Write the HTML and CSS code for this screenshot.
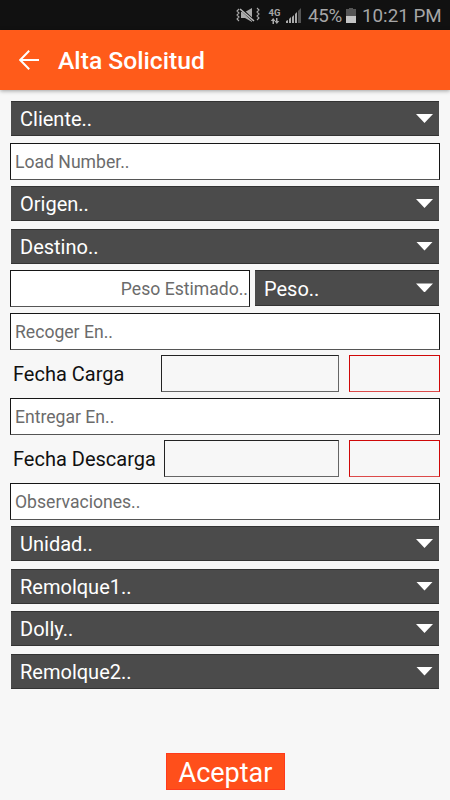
FILE: index.html
```html
<!DOCTYPE html>
<html lang="es">
<head>
<meta charset="utf-8">
<title>Alta Solicitud</title>
<link rel="stylesheet" href="styles.css">
</head>
<body>
<div class="status">
  <svg class="mute" width="24" height="18" viewBox="0 0 24 18">
    <path d="M5 6h4l7-4v14l-7-4H5z" fill="#aaa"/>
    <path d="M4 2l15 14" stroke="#111" stroke-width="2.6"/>
    <path d="M4 3l14 12" stroke="#bbb" stroke-width="1.6"/>
    <path d="M3 3L1 5l2 2-2 2 2 2-2 2 2 2M21 2l2 2-2 2 2 2-2 2 2 2-2 2" fill="none" stroke="#aaa" stroke-width="1.1"/>
  </svg>
  <div class="net"><span>4G</span>
    <svg width="10" height="6" viewBox="0 0 10 6"><path d="M2.5 6V3H.7L3.2 0l2.3 3H4v3zM6 0h1.5v3h1.8L6.8 6 4.5 3H6z" fill="#aaa"/></svg>
  </div>
  <svg class="signal" width="16" height="15" viewBox="0 0 16 15">
    <path d="M0 15v-2l2-1v3zM3 15v-4l2-2v6zM6 15V9l2-2v8zM9 15V6l2-2v11z" fill="#aaa"/>
    <path d="M12 15V3l3-3v15z" fill="#555"/>
  </svg>
  <span class="pct">45%</span>
  <svg class="battery" width="10" height="15" viewBox="0 0 10 15"><path d="M3 0h4v1h3v7H0V1h3z" fill="#555"/><path d="M0 8h10v7H0z" fill="#c4c4c4"/></svg>
  <span class="clock">10:21 PM</span>
</div>
<header class="bar">
  <svg width="20" height="20" viewBox="0 0 20 20"><path d="M10.2.8L1.2 10l9 9.2M1.2 10H20" fill="none" stroke="#fff" stroke-width="2"/></svg>
  <h1>Alta Solicitud</h1>
</header>
<main class="form">
  <div class="select">Cliente..<i></i></div>
  <div class="field">Load Number..</div>
  <div class="select">Origen..<i></i></div>
  <div class="select">Destino..<i></i></div>
  <div class="split">
    <div class="field weight">Peso Estimado..</div>
    <div class="select unit">Peso..<i></i></div>
  </div>
  <div class="field">Recoger En..</div>
  <div class="dates load"><label>Fecha Carga</label><div class="box"></div><div class="box time"></div></div>
  <div class="field">Entregar En..</div>
  <div class="dates unload"><label>Fecha Descarga</label><div class="box"></div><div class="box time"></div></div>
  <div class="field">Observaciones..</div>
  <div class="select">Unidad..<i></i></div>
  <div class="select">Remolque1..<i></i></div>
  <div class="select">Dolly..<i></i></div>
  <div class="select">Remolque2..<i></i></div>
</main>
<button class="accept">Aceptar</button>
</body>
</html>
```
FILE: styles.css
```css
* { box-sizing: border-box; }
body {
  margin: 0;
  width: 450px;
  height: 800px;
  overflow: hidden;
  background: #f7f7f7;
  font-family: Roboto, sans-serif;
}
svg { display: block; flex: none; }
.status {
  height: 30px;
  background: #111;
  color: #a6a6a6;
  display: flex;
  align-items: center;
  padding-left: 236px;
  padding-top: 2px;
  font-size: 18.8px;
  white-space: nowrap;
}
.mute { margin-top: -2px; }
.net {
  width: 13px;
  margin-left: 8px;
  display: flex;
  flex-direction: column;
  align-items: center;
  gap: 1px;
  font-size: 9.5px;
  line-height: 8px;
  font-weight: 700;
}
.signal { margin: -1px 0 0 5px; }
.pct { width: 34px; margin-left: 6px; letter-spacing: -.3px; }
.battery { margin: -1px 0 0 4px; }
.clock { margin-left: 6px; }
.bar {
  height: 60px;
  background: #ff5b1a;
  display: flex;
  align-items: center;
  padding: 2px 0 0 19px;
  gap: 19px;
  color: #fff;
  box-shadow: 0 1px 4px rgba(0, 0, 0, .35);
}
.bar svg { margin-top: -2px; }
.bar h1 { margin: 0; font-size: 24.7px; font-weight: 500; line-height: 30px; }
.form {
  display: grid;
  grid-auto-rows: 42.5px;
  align-items: start;
  padding: 10.4px 10px 0;
}
.field {
  height: 37px;
  border: 1px solid #161616;
  border-bottom-color: #555;
  background: #fff;
  color: #6b6b6b;
  font-size: 17.6px;
  line-height: 36px;
  padding: 0 4px;
}
.select {
  height: 35px;
  margin: .7px 1px 0;
  padding: 0 6px 0 9px;
  background: #4b4b4b;
  border-top: 1px solid #333;
  border-bottom: 1px solid #333;
  color: #fff;
  font-size: 20px;
  line-height: 35px;
  display: flex;
  justify-content: space-between;
}
.select i {
  width: 17px;
  height: 9px;
  margin-top: 12px;
  background: #fff;
  clip-path: polygon(0 0, 100% 0, 50% 100%);
}
.split { display: grid; grid-template-columns: 240px 1fr; column-gap: 5px; }
.weight { text-align: right; padding-right: 1px; }
.unit { height: 36px; margin: 0 1px 0 0; line-height: 36px; }
.dates {
  display: grid;
  column-gap: 10px;
  padding-left: 3px;
  line-height: 39px;
  font-size: 20px;
  color: #111;
}
.dates label { white-space: nowrap; height: 37px; }
.load { grid-template-columns: 138px 178px 91px; }
.unload { grid-template-columns: 141px 175px 91px; }
.box { height: 37px; border: 1px solid #222; border-bottom-color: #666; border-right-color: #666; }
.box.time { border-color: #cf0808; border-bottom-color: #dc4a4a; }
.accept {
  display: block;
  width: 119px;
  height: 37px;
  margin: 57.6px 0 0 166px;
  padding: 2px 0 0;
  border: 1px solid #ff3a1c;
  background: #ff4f1b;
  color: #fff;
  font: 27px/34px Roboto, sans-serif;
}
```
